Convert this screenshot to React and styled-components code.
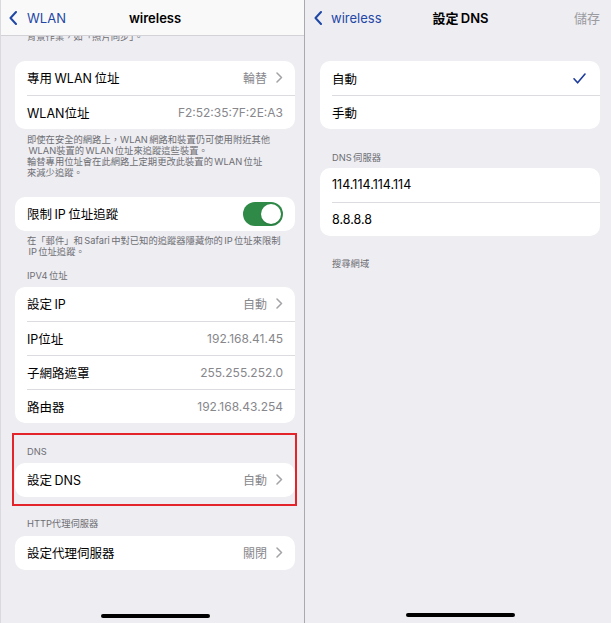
import React from "react";
import styled, { createGlobalStyle } from "styled-components";

const GlobalStyle = createGlobalStyle`
  *, *::before, *::after { box-sizing: border-box; }
  html, body { margin: 0; padding: 0; background: #ededf2; }
  body { font-family: "Inter", "Noto Sans CJK TC", sans-serif; -webkit-font-smoothing: antialiased; }
`;

const Frame = styled.div`
  display: flex;
  width: 611px;
  height: 623px;
  overflow: hidden;
`;

const Panel = styled.div`
  width: ${(p) => p.$w}px;
  flex: none;
  display: flex;
  flex-direction: column;
  background: #ededf2;
  border-left: ${(p) => (p.$edge ? "1px solid #d9d9de" : "none")};
`;

const Divider = styled.div`
  width: 1px;
  flex: none;
  background: #a9a9ae;
`;

const NavBar = styled.div`
  height: ${(p) => (p.$bordered ? 36 : 35)}px;
  flex: none;
  display: grid;
  grid-template-columns: 1fr auto 1fr;
  align-items: center;
  padding: ${(p) => p.$pad};
  background: ${(p) => (p.$bordered ? "#f9f9f9" : "transparent")};
  border-bottom: ${(p) => (p.$bordered ? "1px solid #d3d3d7" : "none")};
`;

const Back = styled.div`
  display: flex;
  align-items: center;
  gap: ${(p) => p.$gap}px;
  color: #1f47a6;
  font-size: 13px;
  justify-self: start;
`;

const Title = styled.div`
  font-size: 13px;
  font-weight: 600;
  color: #000;
  white-space: nowrap;
  word-spacing: -1px;
`;

const Action = styled.div`
  justify-self: end;
  font-size: 13px;
  color: #9b9ba0;
  padding-right: 7px;
`;

const Body = styled.div`
  flex: 1;
  min-height: 0;
  display: flex;
  flex-direction: column;
  overflow: hidden;
  padding: ${(p) => p.$pad};
`;

const Card = styled.div`
  background: #fff;
  border-radius: 10px;
  overflow: hidden;
  margin-top: ${(p) => p.$mt || 0}px;
  flex: none;
`;

const Row = styled.div`
  height: 34px;
  padding-left: 12px;
  display: flex;
`;

const RowBody = styled.div`
  flex: 1;
  display: flex;
  align-items: center;
  justify-content: space-between;
  padding-right: 12px;
  border-top: ${(p) => (p.$sep ? "1px solid #dcdce0" : "none")};
`;

const Label = styled.span`
  font-size: 12.5px;
  color: #000;
  white-space: nowrap;
  word-spacing: -1px;
`;

const Value = styled.span`
  display: flex;
  align-items: center;
  gap: 9px;
  font-size: 12px;
  color: #87878c;
  white-space: nowrap;
`;

const Note = styled.div`
  font-size: 9.3px;
  line-height: 10.8px;
  color: #6d6d72;
  padding-left: 12px;
  white-space: nowrap;
  word-spacing: -1.2px;
  margin-top: ${(p) => p.$mt || 0}px;
  flex: none;
`;

const Highlight = styled.div`
  flex: none;
  margin: 9.6px -2px 0 -3px;
  border: 2px solid #e3242b;
  padding: 12.6px 0 7px 1px;
`;

const Switch = styled.span`
  width: 40px;
  height: 24px;
  border-radius: 12px;
  background: #2f8a48;
  display: flex;
  justify-content: flex-end;
  align-items: center;
  padding: 2px;
`;

const Knob = styled.span`
  width: 20px;
  height: 20px;
  border-radius: 50%;
  background: #fff;
  box-shadow: 0 1px 2px rgba(0, 0, 0, 0.15);
`;

const HomeBar = styled.div`
  flex: none;
  margin-top: auto;
  margin-bottom: ${(p) => p.$mb}px;
  align-self: center;
  width: 109px;
  height: 4px;
  border-radius: 2px;
  background: #000;
`;

const BackChevron = () => (
  <svg width="8" height="14" viewBox="0 0 8 14">
    <path d="M7 1 L1.5 7 L7 13" fill="none" stroke="#1f47a6" strokeWidth="2" strokeLinecap="round" strokeLinejoin="round" />
  </svg>
);

const Chevron = () => (
  <svg width="7" height="11" viewBox="0 0 7 11">
    <path d="M1 1 L5.5 5.5 L1 10" fill="none" stroke="#a2a2a7" strokeWidth="1.5" strokeLinecap="round" strokeLinejoin="round" />
  </svg>
);

const Check = () => (
  <svg width="13" height="11" viewBox="0 0 13 11" style={{ marginRight: 2 }}>
    <path d="M1 5.8 L4.6 9.8 L12 1" fill="none" stroke="#1d3b9c" strokeWidth="1.6" strokeLinecap="round" strokeLinejoin="round" />
  </svg>
);

const Item = ({ label, value, chevron, sep, children }) => (
  <Row>
    <RowBody $sep={sep}>
      <Label>{label}</Label>
      {children}
      {value !== undefined && (
        <Value>
          {value}
          {chevron && <Chevron />}
        </Value>
      )}
    </RowBody>
  </Row>
);

export default function App() {
  return (
    <>
      <GlobalStyle />
      <Frame>
        <Panel $w={304} $edge>
          <NavBar $bordered $pad="0 3px 0 8px">
            <Back $gap={10}>
              <BackChevron />
              WLAN
            </Back>
            <Title>wireless</Title>
            <span />
          </NavBar>
          <Body $pad="0 9px 0 14px">
            <Note $mt={-4}>背景作業，如「照片同步」。</Note>
            <Card $mt={18}>
              <Item label="專用 WLAN 位址" value="輪替" chevron />
              <Item label="WLAN位址" value="F2:52:35:7F:2E:A3" sep />
            </Card>
            <Note $mt={6.6}>
              即使在安全的網路上，WLAN 網路和裝置仍可使用附近其他
              <br />
              &nbsp;WLAN裝置的 WLAN 位址來追蹤這些裝置。
              <br />
              輪替專用位址會在此網路上定期更改此裝置的 WLAN 位址
              <br />
              來減少追蹤。
            </Note>
            <Card $mt={18.2}>
              <Item label="限制 IP 位址追蹤">
                <Switch>
                  <Knob />
                </Switch>
              </Item>
            </Card>
            <Note $mt={5.3}>
              在「郵件」和 Safari 中對已知的追蹤器隱藏你的 IP 位址來限制
              <br />
              &nbsp;IP 位址追蹤。
            </Note>
            <Note $mt={13.5}>IPV4 位址</Note>
            <Card $mt={5}>
              <Item label="設定 IP" value="自動" chevron />
              <Item label="IP位址" value="192.168.41.45" sep />
              <Item label="子網路遮罩" value="255.255.252.0" sep />
              <Item label="路由器" value="192.168.43.254" sep />
            </Card>
            <Highlight>
              <Note>DNS</Note>
              <Card $mt={4.6}>
                <Item label="設定 DNS" value="自動" chevron />
              </Card>
            </Highlight>
            <Note $mt={13.6}>HTTP代理伺服器</Note>
            <Card $mt={5.6}>
              <Item label="設定代理伺服器" value="關閉" chevron />
            </Card>
            <HomeBar $mb={5} />
          </Body>
        </Panel>
        <Divider />
        <Panel $w={306}>
          <NavBar $pad="0 4px 0 9px">
            <Back $gap={9}>
              <BackChevron />
              wireless
            </Back>
            <Title>設定 DNS</Title>
            <Action>儲存</Action>
          </NavBar>
          <Body $pad="0 11px 0 15px">
            <Card $mt={26}>
              <Item label="自動">
                <Check />
              </Item>
              <Item label="手動" sep />
            </Card>
            <Note $mt={23.6}>DNS 伺服器</Note>
            <Card $mt={4.6}>
              <Item label="114.114.114.114" />
              <Item label="8.8.8.8" sep />
            </Card>
            <Note $mt={22.6}>搜尋網域</Note>
            <HomeBar $mb={6} />
          </Body>
        </Panel>
      </Frame>
    </>
  );
}
